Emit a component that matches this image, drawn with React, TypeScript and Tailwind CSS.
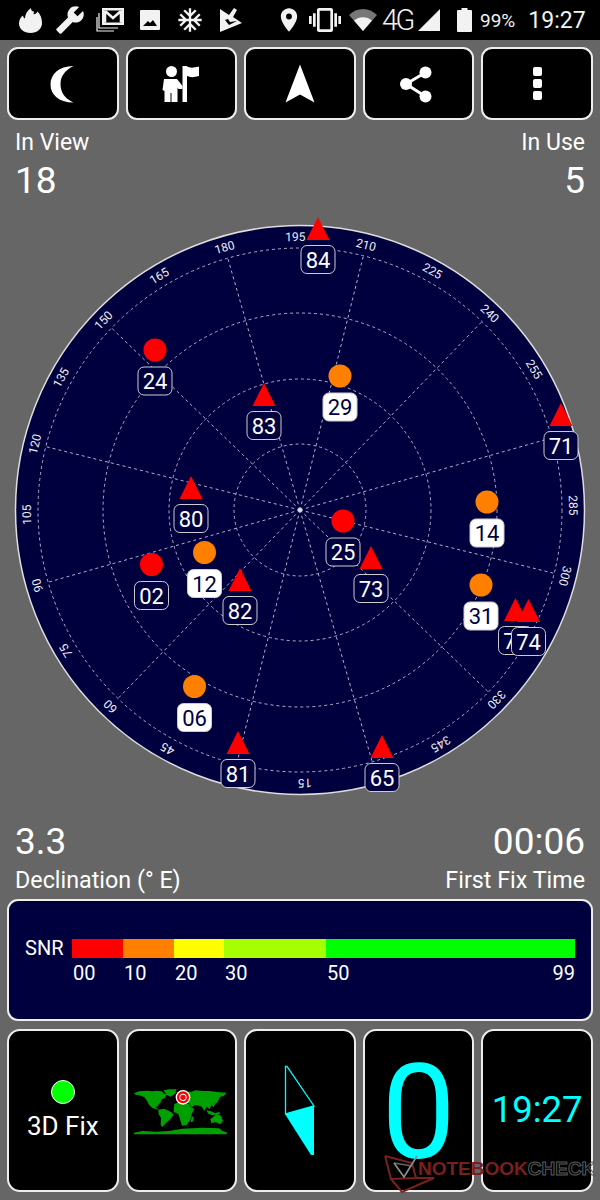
import { MdAcUnit, MdBuild, MdLocationOn, MdVibration } from "react-icons/md"

const cx = 300
const cy = 510

type Sat = { id: string; x: number; y: number; kind: "tri" | "dot"; used?: boolean; color?: string }

// y is the top of the triangle, or the centre of the dot
const sats: Sat[] = [
  { id: "84", x: 318, y: 217, kind: "tri" },
  { id: "24", x: 155, y: 350, kind: "dot", color: "#ff0000" },
  { id: "83", x: 264, y: 383, kind: "tri" },
  { id: "29", x: 340, y: 376, kind: "dot", color: "#ff8000", used: true },
  { id: "71", x: 561, y: 403, kind: "tri" },
  { id: "14", x: 487, y: 502, kind: "dot", color: "#ff8000", used: true },
  { id: "80", x: 191, y: 476, kind: "tri" },
  { id: "02", x: 151.5, y: 564.5, kind: "dot", color: "#ff0000" },
  { id: "12", x: 204.5, y: 552.5, kind: "dot", color: "#ff8000", used: true },
  { id: "82", x: 240, y: 568, kind: "tri" },
  { id: "25", x: 343, y: 521, kind: "dot", color: "#ff0000" },
  { id: "73", x: 371, y: 546, kind: "tri" },
  { id: "31", x: 481, y: 585, kind: "dot", color: "#ff8000", used: true },
  { id: "72", x: 515.5, y: 598, kind: "tri" },
  { id: "74", x: 528.5, y: 599, kind: "tri" },
  { id: "06", x: 194.5, y: 686.5, kind: "dot", color: "#ff8000", used: true },
  { id: "81", x: 238, y: 731, kind: "tri" },
  { id: "65", x: 382, y: 735, kind: "tri" },
]

const hiddenLabels = [0, 30, 270, 315]

function polar(az: number, r: number) {
  const a = ((az - 196) * Math.PI) / 180
  return { x: cx + r * Math.sin(a), y: cy - r * Math.cos(a) }
}

function SkyPlot() {
  const spokes = Array.from({ length: 12 }, (_, i) => i * 30)
  const labels = Array.from({ length: 24 }, (_, i) => i * 15).filter((a) => !hiddenLabels.includes(a))
  return (
    <svg viewBox="0 210 600 600" className="block w-[600px] h-[600px]">
      <circle cx={cx} cy={cy} r={284.5} fill="#00003f" stroke="#dddddd" strokeWidth={1.5} />
      {[66, 131, 197, 262].map((r) => (
        <circle key={r} cx={cx} cy={cy} r={r} fill="none" stroke="#b0b0c8" strokeDasharray="3 3" />
      ))}
      {spokes.map((az) => {
        const p = polar(az, 262)
        return <line key={az} x1={cx} y1={cy} x2={p.x} y2={p.y} stroke="#b0b0c8" strokeDasharray="3 3" />
      })}
      <circle cx={cx} cy={cy} r={2} fill="#dddddd" />
      {labels.map((az) => {
        const p = polar(az, 273)
        return (
          <text
            key={az}
            x={p.x}
            y={p.y}
            fill="#eeeeee"
            fontSize={12}
            textAnchor="middle"
            dominantBaseline="central"
            transform={`rotate(${az - 196} ${p.x} ${p.y})`}
          >
            {az}
          </text>
        )
      })}
      {sats.map((s) => {
        const bottom = s.kind === "tri" ? s.y + 23 : s.y + 11.5
        const top = bottom + 5.5
        return (
          <g key={s.id}>
            {s.kind === "tri" ? (
              <polygon points={`${s.x},${s.y} ${s.x + 11.5},${s.y + 23} ${s.x - 11.5},${s.y + 23}`} fill="#ff0000" />
            ) : (
              <circle cx={s.x} cy={s.y} r={11.5} fill={s.color} />
            )}
            <rect
              x={s.x - 17}
              y={top}
              width={34}
              height={28}
              rx={6}
              fill={s.used ? "#ffffff" : "#00003f"}
              stroke="#cccccc"
            />
            <text
              x={s.x}
              y={top + 14.5}
              fill={s.used ? "#00003f" : "#ffffff"}
              fontSize={22}
              textAnchor="middle"
              dominantBaseline="central"
            >
              {s.id}
            </text>
          </g>
        )
      })}
    </svg>
  )
}

function StatusBar() {
  return (
    <div className="h-10 bg-black flex items-center text-[#f2f2f2]">
      <svg viewBox="0 0 23 25" className="w-[23px] h-[25px] ml-[19px]" fill="currentColor">
        <path d="M11.5 25C5 25 0 21 0 15.5 0 11.5 2 9 4 7.5c.2 1.5.8 2.5 2 3C6 6.5 8 2.5 12 0c0 2.5 1 3.5 2.5 3 .5 1.2.5 2.3 0 3.5 2-.5 3.3-1.500 4-3 2.800 3 4.500 6.500 4.500 11.500C23 21 18 25 11.500 25z" />
      </svg>
      <MdBuild className="w-[30px] h-[30px] ml-[13px] -scale-x-100 -mr-[2px]" />
      <svg viewBox="0 0 28 24" className="w-[28px] h-[24px] ml-[13px]" fill="none" stroke="currentColor">
        <path d="M6 0h22v17H6z" fill="currentColor" stroke="none" />
        <path d="M8.500 2.500h17v12h-17z" fill="#000000" stroke="none" />
        <path d="M9 3l8 7 8-7M9 3v11.500M25 3v11.500" strokeWidth={2.600} />
        <path d="M3 5v15h19M1 9v14h17" strokeWidth={1.200} />
      </svg>
      <svg viewBox="0 0 20 20" className="w-5 h-5 ml-[16px]" fill="currentColor">
        <path d="M1 0h18a1 1 0 0 1 1 1v18a1 1 0 0 1-1 1H1a1 1 0 0 1-1-1V1a1 1 0 0 1 1-1zm2 16h14l-4-6-3 3-2-2z" fillRule="evenodd" />
      </svg>
      <MdAcUnit className="w-[28px] h-[28px] ml-[16px]" />
      <svg viewBox="0 0 22 24" className="w-[22px] h-[24px] ml-[16px]" fill="currentColor">
        <path d="M0 1l9 6 5-7 3 2-4 7 9 6-22 9zm5 11l4 5 8-4-7 1-2-3z" fillRule="evenodd" />
      </svg>
      <MdLocationOn className="w-[28px] h-[28px] ml-[33px]" />
      <MdVibration className="w-[32px] h-[32px] ml-[6px]" />
      <svg viewBox="0 0 28 22" className="w-[28px] h-[22px] ml-[8px]">
        <path d="M0 6C8-2 20-2 28 6L14 22z" fill="#777777" />
        <path d="M5 11.500C10 7 18 7 23 11.500L14 22z" fill="currentColor" />
      </svg>
      <span className="ml-[5px] w-[32px] text-[29px] leading-none font-light tracking-[-2.500px]">4G</span>
      <svg viewBox="0 0 22 22" className="w-[22px] h-[22px] ml-[4px]" fill="currentColor">
        <path d="M22 0v22H0z" />
      </svg>
      <svg viewBox="0 0 15 24" className="w-[15px] h-[24px] ml-[17px]" fill="currentColor">
        <path d="M4.500 0h6v2H14a1 1 0 0 1 1 1v20a1 1 0 0 1-1 1H1a1 1 0 0 1-1-1V3a1 1 0 0 1 1-1h3.500z" />
      </svg>
      <span className="ml-[8px] text-[19px] leading-none">99%</span>
      <span className="ml-[13px] text-[23px] leading-none">19:27</span>
    </div>
  )
}

function ToolButton({ children }: { children: React.ReactNode }) {
  return (
    <div className="h-[73px] bg-black border-2 border-[#eeeeee] rounded-[11px] flex items-center justify-center">
      {children}
    </div>
  )
}

function Toolbar() {
  return (
    <div className="grid grid-cols-5 gap-[7px] px-[7px] mt-[7px]">
      <ToolButton>
        <svg viewBox="0 0 40 40" className="w-10 h-10" fill="#ffffff">
          <path d="M30.500 2C15.500 2 7.500 10.500 7.500 20.500 7.500 30.500 15.500 38.500 30.500 38.500 21.500 34.500 17.500 27.500 17.500 20.500 17.500 12.500 21.500 6.500 30.500 2z" />
        </svg>
      </ToolButton>
      <ToolButton>
        <svg viewBox="0 0 40 40" className="w-10 h-10" fill="#ffffff">
          <circle cx="10.500" cy="7.500" r="5.500" />
          <path d="M3 15h13l5.500 7v3h-4l-1-1.500V38h-6V29h-1v9H3.500V27L1.500 26z" />
          <path d="M21.500 2H26v36h-4.500z" />
          <path d="M26 2.500c3 1.500 6 1.500 12 0V12c-5 1.500-9 1.500-12 0z" />
        </svg>
      </ToolButton>
      <ToolButton>
        <svg viewBox="0 0 40 40" className="w-10 h-10" fill="#ffffff">
          <path d="M20 0.500L34.500 38.500 20 30.500 5.500 38.500z" />
        </svg>
      </ToolButton>
      <ToolButton>
        <svg viewBox="0 0 40 40" className="w-10 h-10" fill="#ffffff" stroke="#ffffff">
          <path d="M26.500 8.500L7 20l19.500 12.500" fill="none" strokeWidth={3} />
          <circle cx="26.500" cy="8.500" r="6" stroke="none" />
          <circle cx="7" cy="20" r="6" stroke="none" />
          <circle cx="26.500" cy="32.500" r="6" stroke="none" />
        </svg>
      </ToolButton>
      <ToolButton>
        <div className="flex flex-col gap-[3px]">
          <div className="w-[9px] h-[9px] rounded-[2px] bg-white" />
          <div className="w-[9px] h-[9px] rounded-[2px] bg-white" />
          <div className="w-[9px] h-[9px] rounded-[2px] bg-white" />
        </div>
      </ToolButton>
    </div>
  )
}

function SnrPanel() {
  const bands = [
    { w: "w-[51px]", color: "bg-[#ff0000]", label: "00" },
    { w: "w-[51px]", color: "bg-[#ff8000]", label: "10" },
    { w: "w-[50px]", color: "bg-[#ffff00]", label: "20" },
    { w: "w-[102px]", color: "bg-[#a6ff00]", label: "30" },
    { w: "flex-1", color: "bg-[#00ff00]", label: "50", end: "99" },
  ]
  return (
    <div className="mx-[7px] h-[122px] bg-[#00003f] border-2 border-[#eeeeee] rounded-[11px] px-4 pt-[38px] text-white text-[20px]">
      <div className="flex items-center">
        <span className="w-[47px] leading-[19px]">SNR</span>
        <div className="flex flex-1 h-[19px]">
          {bands.map((b) => (
            <div key={b.label} className={`${b.w} ${b.color}`} />
          ))}
        </div>
      </div>
      <div className="flex ml-[47px] mt-[4px] leading-[23px]">
        {bands.map((b) => (
          <div key={b.label} className={`${b.w} flex justify-between pl-[1px]`}>
            <span>{b.label}</span>
            {b.end && <span>{b.end}</span>}
          </div>
        ))}
      </div>
    </div>
  )
}

function Card({ children }: { children: React.ReactNode }) {
  return (
    <div className="h-[163px] bg-black border-2 border-[#eeeeee] rounded-[13px] flex flex-col items-center justify-center overflow-hidden">
      {children}
    </div>
  )
}

function WorldMap() {
  return (
    <svg viewBox="0 0 312 174" className="w-[104px] h-[58px]" fill="#00a000">
      <path d="M15 34L30 28 52 26 70 28 82 26 98 28 104 34 112 38 108 48 98 52 94 62 88 68 85 74 78 74 90 84 82 82 70 78 60 68 54 56 46 46 38 42 30 40 20 38z" />
      <path d="M104 25L120 22 143 22 137 36 124 44 112 38z" />
      <path d="M88 83L105 80 118 86 128 91 133 98 124 112 112 122 105 130 100 135 95 128 96 108 89 96z" />
      <path d="M150 56L142 40 170 28 185 30 200 25 220 27 240 27 265 30 293 32 284 42 274 44 270 52 264 62 258 66 254 76 247 68 242 82 233 74 226 86 218 74 206 70 196 70 188 76 180 64 168 62 158 62z" />
      <path d="M136 66L150 60 166 61 180 66 186 76 196 81 188 96 184 114 172 130 159 131 152 108 148 96 134 90z" />
      <path d="M188 106L194 103 192 119 185 120z" />
      <path d="M244 112L256 102 262 96 270 98 276 102 282 116 274 127 260 120 247 124z" />
      <path d="M232 85L246 88 258 94 270 90 274 96 250 100 238 95z" />
      <path d="M15 152L40 147 80 149 120 147 160 140 220 137 270 139 280 147 293 151 293 157 15 157z" />
      <circle cx="162" cy="46" r="22" fill="#ffffff" />
      <circle cx="162" cy="46" r="18" fill="#ff0000" />
      <circle cx="162" cy="46" r="11" fill="#ffffff" />
      <circle cx="162" cy="46" r="8" fill="#ff0000" />
    </svg>
  )
}

function BottomCards() {
  return (
    <div className="relative grid grid-cols-5 gap-[7px] px-[7px] mt-2">
      <Card>
        <div className="w-[24px] h-[24px] rounded-full bg-[#00ff00] border border-white" />
        <span className="text-white text-[26px] leading-[30px] mt-[7px]">3D Fix</span>
      </Card>
      <Card>
        <WorldMap />
      </Card>
      <Card>
        <svg viewBox="0 0 34 94" className="w-[34px] h-[94px]">
          <path d="M2.500 2.500h1.500L31 42 2.500 50z" fill="none" stroke="#00ffff" strokeWidth={1.300} />
          <path d="M2 50L31 42V91h-3z" fill="#00ffff" />
        </svg>
      </Card>
      <Card>
        <span className="text-[#00ffff] text-[132px] leading-none mt-[5px]">0</span>
      </Card>
      <Card>
        <span className="text-[#00ffff] text-[36.5px] leading-none">19:27</span>
      </Card>
      {/* watermark */}
      <div className="absolute left-[385px] top-[126px] flex items-start">
        <svg viewBox="0 0 52 38" className="w-[52px] h-[38px] -ml-[1px]" fill="none" stroke="#7a2020" strokeWidth={2}>
          <path d="M1 1l27 7 4 15M1 1l6 23 25-1" />
          <path d="M7 24l11 13 32-14-18 0" />
          <path d="M10 8l18 3" stroke="#666666" strokeWidth={1.500} />
          <path d="M10 8l10 14 13-21" stroke="#8a8a8a" strokeWidth={1.800} />
        </svg>
        <span className="ml-[-18px] mt-[3px] font-['Liberation_Sans',sans-serif] font-bold text-[19px] leading-[22px] text-[#7a1f1f]">
          NOTEBOOK
        </span>
        <span className="mt-[3px] font-['Liberation_Sans',sans-serif] font-bold text-[19px] leading-[22px] text-transparent [-webkit-text-stroke:1px_#5a5a5a]">
          CHECK
        </span>
      </div>
    </div>
  )
}

export default function App() {
  return (
    <div className="relative w-[600px] h-[1200px] overflow-hidden bg-[#666666] font-['Roboto',sans-serif] text-white">
      <StatusBar />
      <Toolbar />

      <div className="flex justify-between px-[15px] h-[90px] pt-[10px]">
        <div>
          <div className="text-[23px] leading-[26px]">In View</div>
          <div className="text-[37px] leading-[42px] mt-[4px]">18</div>
        </div>
        <div className="text-right">
          <div className="text-[23px] leading-[26px]">In Use</div>
          <div className="text-[37px] leading-[42px] mt-[4px]">5</div>
        </div>
      </div>

      <SkyPlot />

      <div className="flex justify-between items-end px-[15px] h-[89px] pb-[6px]">
        <div>
          <div className="text-[37px] leading-[42px]">3.3</div>
          <div className="text-[23.3px] leading-[26px] mt-[4px]">Declination (° E)</div>
        </div>
        <div className="text-right">
          <div className="text-[37px] leading-[42px]">00:06</div>
          <div className="text-[23.3px] leading-[26px] mt-[4px]">First Fix Time</div>
        </div>
      </div>

      <SnrPanel />
      <BottomCards />
    </div>
  )
}
